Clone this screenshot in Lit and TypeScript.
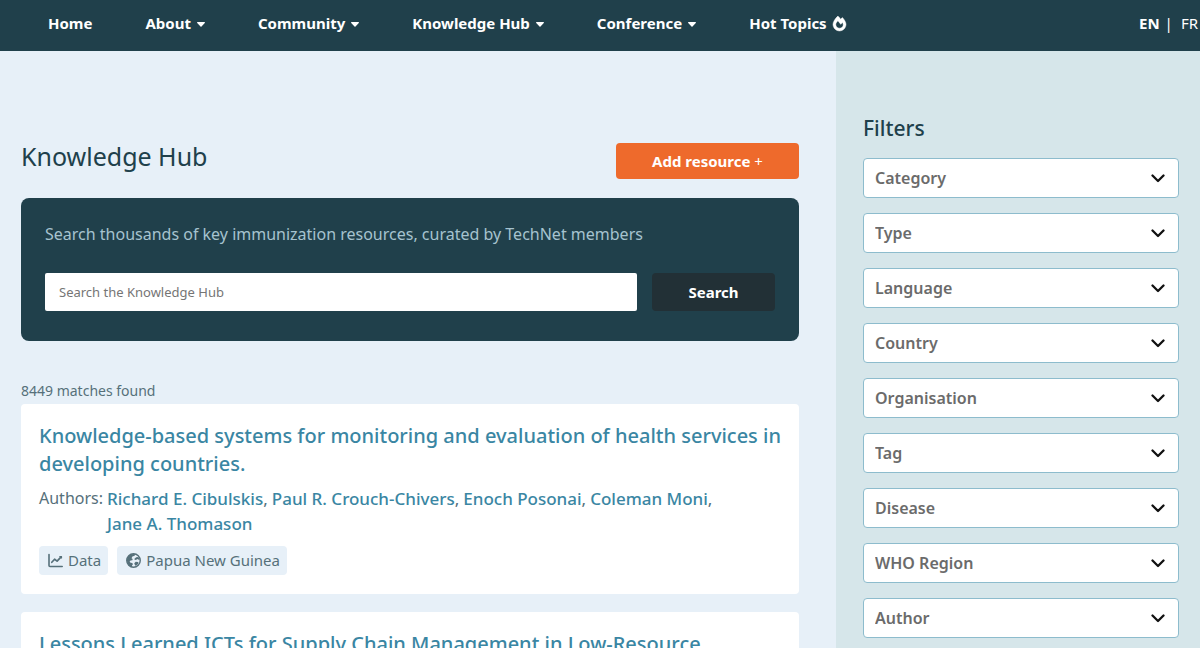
import { LitElement, html, css } from "lit";
import { customElement } from "lit/decorators.js";

const caretIcon = html`<svg class="caret" viewBox="0 0 8 5" aria-hidden="true">
  <path d="M0.6 0h6.8c.5 0 .8.6.4 1L4.5 4.6a.7.7 0 0 1-1 0L.2 1C-.2.6.1 0 .6 0z" fill="currentColor" />
</svg>`;

const fireIcon = html`<svg class="fire" viewBox="0 0 448 512" aria-hidden="true">
  <path
    fill="currentColor"
    stroke="currentColor"
    stroke-width="16"
    d="M323.56 51.2c-20.8 19.3-39.58 39.59-56.22 59.97C240.08 73.62 206.28 35.53 168 0 69.74 91.17 0 209.96 0 281.6 0 408.85 100.29 512 224 512s224-103.15 224-230.4c0-53.27-51.98-163.14-124.44-230.4zm-19.47 340.65C282.43 407.01 255.72 416 226.86 416 154.71 416 96 368.26 96 290.75c0-38.61 24.31-72.63 72.79-130.75 6.93 7.98 98.83 125.34 98.83 125.34l58.63-66.88c4.14 6.85 7.91 13.55 11.27 19.97 27.35 52.19 15.81 118.97-33.43 153.42z"
  />
</svg>`;

const chevronIcon = html`<svg class="chevron" viewBox="0 0 14 9" aria-hidden="true">
  <path d="M1.500 1.500 7 7l5.500-5.500" fill="none" stroke="currentColor" stroke-width="2.300" stroke-linecap="round" stroke-linejoin="round" />
</svg>`;

const chartIcon = html`<svg class="tag-icon" viewBox="0 0 15 15" aria-hidden="true">
  <g fill="none" stroke="currentColor" stroke-linecap="round" stroke-linejoin="round">
    <path stroke-width="1.600" d="M1 1.500v11c0 .6.400 1 1 1h12.200" />
    <path stroke-width="1.700" d="M3.800 9.300 6.600 6.200l2.500 1.900 4-4.300" />
    <path stroke-width="1.200" d="M11.800 3.500h1.700v1.500" />
  </g>
</svg>`;

const globeIcon = html`<svg class="tag-icon" viewBox="0 0 16 16" aria-hidden="true">
  <circle cx="8" cy="8" r="7.200" fill="none" stroke="currentColor" stroke-width="1.500" />
  <path
    fill="currentColor"
    d="M1 8C1 4 4 1 8 1l1.800.3-.6 1.500-2.400.9-.9 1.900 1.200.9-.3 1.200-2 .2-1 1.300 1.100 1.200 1.800.2.700 1.300-1 1.300.1 1.900C3.200 14.200 1 11.500 1 8zM9 6.200l1.900-1.600 2.200-.4 1.600 2.600-1.300.4-.9-.8-1.700.9-1.400.1zM8.800 10.800l1.600-1.400 2.200.3 1 1-1.800 2.200-2 .6z"
  />
</svg>`;

interface NavItem {
  label: string;
  menu?: boolean;
  hot?: boolean;
}

const NAV: NavItem[] = [
  { label: "Home" },
  { label: "About", menu: true },
  { label: "Community", menu: true },
  { label: "Knowledge Hub", menu: true },
  { label: "Conference", menu: true },
  { label: "Hot Topics", hot: true },
];

const FILTERS = ["Category", "Type", "Language", "Country", "Organisation", "Tag", "Disease", "WHO Region", "Author"];

const AUTHORS = ["Richard E. Cibulskis", "Paul R. Crouch-Chivers", "Enoch Posonai", "Coleman Moni", "Jane A. Thomason"];

@customElement("app-root")
export class AppRoot extends LitElement {
  static styles = css`
    :host {
      display: flex;
      flex-direction: column;
      height: 100vh;
      overflow-y: auto;
      scrollbar-width: none;
      background: #e7f0f8;
      color: #56707a;
      font-family: "Noto Sans", "Open Sans", sans-serif;
      font-size: 16px;
    }
    * {
      box-sizing: border-box;
    }
    a {
      color: inherit;
      text-decoration: none;
    }
    h1,
    h2,
    p,
    ul {
      margin: 0;
      padding: 0;
    }
    button,
    input,
    select {
      font: inherit;
      border: 0;
      margin: 0;
    }
    .topbar {
      flex: none;
      display: flex;
      justify-content: space-between;
      align-items: center;
      height: 51px;
      padding: 0 2px 5px 48px;
      background: #20404b;
      color: #fff;
      font-size: 15px;
      line-height: 20px;
    }
    .nav {
      display: flex;
      gap: 53px;
      font-weight: 700;
    }
    .nav-link {
      display: flex;
      align-items: center;
      gap: 6px;
    }
    .caret {
      width: 8px;
      height: 5px;
      margin-top: 2px;
    }
    .fire {
      width: 13px;
      height: 15px;
      overflow: visible;
    }
    .languages {
      display: flex;
      gap: 5px;
    }
    .language-current {
      font-weight: 700;
    }
    .language-other {
      padding-left: 3px;
    }
    .page {
      flex: 1 0 auto;
      display: grid;
      grid-template-columns: minmax(0, 1fr) 364px;
    }
    .content {
      padding: 92px 37px 24px 21px;
    }
    .heading {
      display: flex;
      justify-content: space-between;
      align-items: flex-start;
    }
    .title {
      color: #20404b;
      font-size: 25px;
      line-height: 26px;
      font-weight: 400;
    }
    .add {
      width: 183px;
      height: 36px;
      border-radius: 4px;
      background: #ee6a2c;
      color: #fff;
      font-size: 15px;
      font-weight: 700;
      cursor: pointer;
    }
    .plus {
      font-weight: 400;
    }
    .search {
      margin-top: 19px;
      padding: 24px 24px 30px;
      border-radius: 8px;
      background: #20404b;
    }
    .search-label {
      display: block;
      color: #a6c3cf;
      font-size: 16px;
      line-height: 24px;
    }
    .search-row {
      display: flex;
      align-items: center;
      gap: 15px;
      margin-top: 27px;
    }
    .search-input {
      flex: 1;
      min-width: 0;
      height: 38px;
      padding: 0 14px;
      border-radius: 2px;
      background: #fff;
      color: #333;
      font-size: 13px;
    }
    .search-input::placeholder {
      color: #757575;
      opacity: 1;
    }
    .search-button {
      width: 123px;
      height: 38px;
      border-radius: 4px;
      background: #223036;
      color: #fff;
      font-size: 15px;
      font-weight: 700;
      cursor: pointer;
    }
    .matches {
      margin: 38px 0 1px;
      font-size: 14px;
      line-height: 24px;
    }
    .results {
      display: flex;
      flex-direction: column;
      gap: 18px;
    }
    .card {
      padding: 18px 16px 19px 18px;
      border-radius: 4px;
      background: #fff;
    }
    .card-title {
      color: #3a86a3;
      font-size: 20px;
      line-height: 28px;
      font-weight: 500;
    }
    .authors {
      display: flex;
      gap: 4px;
      margin-top: 8px;
      line-height: 25px;
    }
    .author-list {
      display: flex;
      flex-wrap: wrap;
      column-gap: 4px;
      list-style: none;
      font-size: 17px;
    }
    .author {
      color: #3a86a3;
      font-weight: 500;
    }
    .tags {
      display: flex;
      gap: 9px;
      margin-top: 10px;
    }
    .tag {
      display: flex;
      align-items: center;
      gap: 5px;
      padding: 2px 7px 3px 9px;
      border-radius: 4px;
      background: #e7f0f8;
      font-size: 15px;
      line-height: 24px;
    }
    .tag-icon {
      width: 15px;
      height: 15px;
    }
    .filters {
      display: flex;
      flex-direction: column;
      gap: 15px;
      padding: 63px 21px 10px 27px;
      background: #d6e6ea;
    }
    .filters-title {
      color: #20404b;
      font-size: 21px;
      line-height: 29px;
      font-weight: 500;
    }
    .filter {
      display: grid;
      align-items: center;
    }
    .filter-select,
    .chevron {
      grid-area: 1 / 1;
    }
    .filter-select {
      appearance: none;
      width: 100%;
      height: 40px;
      padding: 0 40px 0 11px;
      border: 1px solid #8dbccd;
      border-radius: 4px;
      background: #fff;
      color: #6b6b6b;
      font-size: 16px;
      font-weight: 600;
    }
    .chevron {
      justify-self: end;
      width: 14px;
      height: 9px;
      margin-right: 14px;
      color: #111;
      pointer-events: none;
    }
  `;

  render() {
    return html`
      <header class="topbar">
        <nav class="nav">
          ${NAV.map(
            (item) => html`<a class="nav-link" href="#">${item.label}${item.menu ? caretIcon : ""}${item.hot ? fireIcon : ""}</a>`
          )}
        </nav>
        <div class="languages">
          <a class="language-current" href="#">EN</a><span>|</span><a class="language-other" href="#">FR</a>
        </div>
      </header>
      <div class="page">
        <main class="content">
          <div class="heading">
            <h1 class="title">Knowledge Hub</h1>
            <button class="add" type="button">Add resource <span class="plus">+</span></button>
          </div>
          <form class="search" @submit=${(e: Event) => e.preventDefault()}>
            <label class="search-label" for="query">Search thousands of key immunization resources, curated by TechNet members</label>
            <div class="search-row">
              <input class="search-input" id="query" type="search" placeholder="Search the Knowledge Hub" />
              <button class="search-button" type="submit">Search</button>
            </div>
          </form>
          <p class="matches">8449 matches found</p>
          <div class="results">
            <article class="card">
              <h2 class="card-title">
                <a href="#">Knowledge-based systems for monitoring and evaluation of health services in developing countries.</a>
              </h2>
              <div class="authors">
                <span>Authors:</span>
                <ul class="author-list">
                  ${AUTHORS.map(
                    (name, i) => html`<li><a class="author" href="#">${name}</a>${i < AUTHORS.length - 1 ? "," : ""}</li>`
                  )}
                </ul>
              </div>
              <div class="tags">
                <span class="tag">${chartIcon}Data</span>
                <span class="tag">${globeIcon}Papua New Guinea</span>
              </div>
            </article>
            <article class="card">
              <h2 class="card-title"><a href="#">Lessons Learned ICTs for Supply Chain Management in Low-Resource</a></h2>
            </article>
          </div>
        </main>
        <aside class="filters">
          <h2 class="filters-title">Filters</h2>
          ${FILTERS.map(
            (name) => html`<div class="filter">
              <select class="filter-select" aria-label=${name}>
                <option>${name}</option>
              </select>
              ${chevronIcon}
            </div>`
          )}
        </aside>
      </div>
    `;
  }
}
